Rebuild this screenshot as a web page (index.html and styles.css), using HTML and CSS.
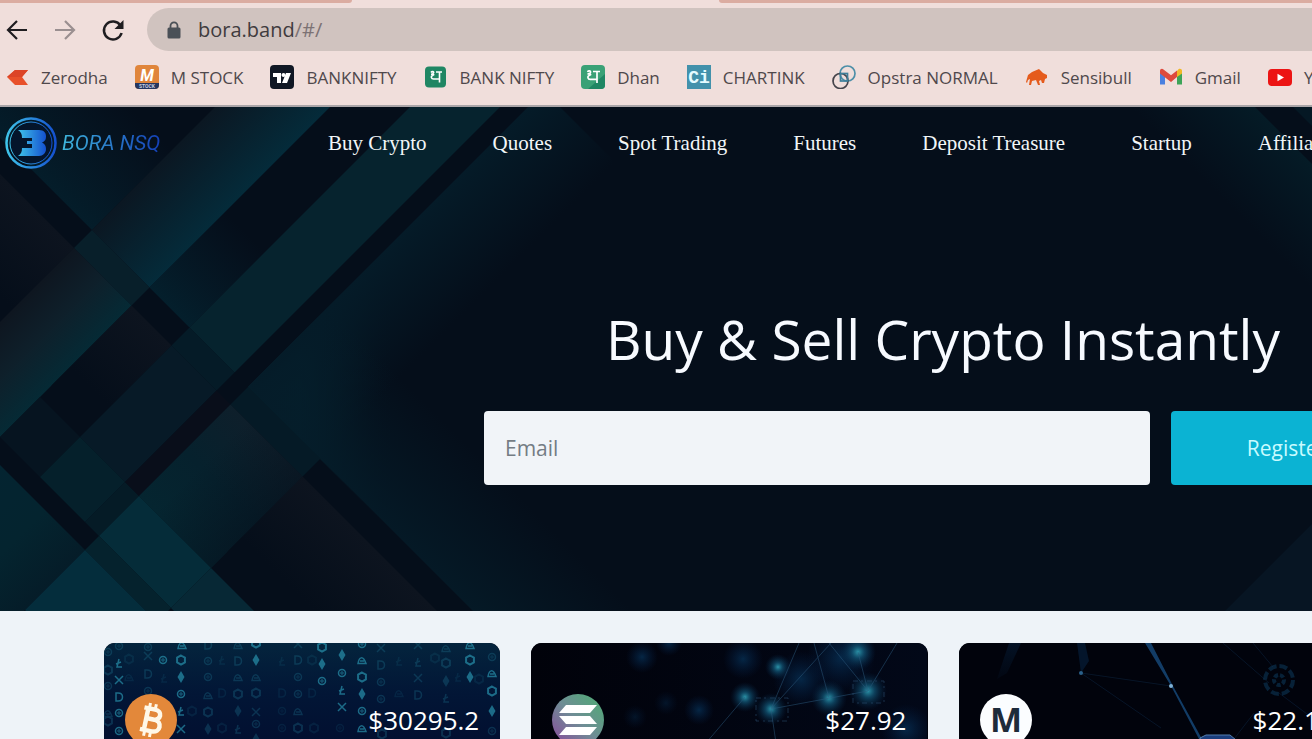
FILE: index.html
```
<!DOCTYPE html>
<html lang="en">
<head>
    <meta charset="UTF-8">
    <meta name="viewport" content="width=device-width, initial-scale=1.0">
    <title>Bora NSQ</title>
    <link rel="stylesheet" href="styles.css">
</head>
<body>

    <div class="browser">
        <div class="tabs">
            <div class="tab tab-left"></div>
            <div class="tab tab-right"></div>
        </div>
        <div class="toolbar">
            <button class="tool" aria-label="Back">
                <svg width="24" height="24" viewBox="0 0 24 24" fill="none" stroke="#1f1d20" stroke-width="2.2"><path d="M22 12H3M12 3l-9 9 9 9"/></svg>
            </button>
            <button class="tool" aria-label="Forward">
                <svg width="24" height="24" viewBox="0 0 24 24" fill="none" stroke="#9a8f90" stroke-width="2.2"><path d="M2 12h19M12 3l9 9-9 9"/></svg>
            </button>
            <button class="tool" aria-label="Reload">
                <svg width="24" height="24" viewBox="0 0 24 24"><path d="M19.5 7.5A9 9 0 1 0 20.6 15" fill="none" stroke="#1f1d20" stroke-width="2.5"/><path d="M22.5 2v9h-9z" fill="#1f1d20"/></svg>
            </button>
            <div class="address">
                <svg width="14" height="18" viewBox="0 0 14 18"><rect x="0.5" y="6.500" width="13" height="11" rx="1.500" fill="#4a5057"/><path d="M3.500 7V4.800a3.500 3.500 0 0 1 7 0V7" fill="none" stroke="#4a5057" stroke-width="1.800"/></svg>
                <span class="url">bora.band<span class="hash">/#/</span></span>
            </div>
        </div>
        <nav class="bookmarks">
            <a href="#">
                <svg width="24" height="24" viewBox="0 0 24 24"><path d="M2 12l8-7h13l-6 7 6 8H10z" fill="#e8502a"/><path d="M2 12l8-7h13l-6 7z" fill="#dc4427"/></svg>
                Zerodha</a>
            <a href="#">
                <svg width="24" height="24" viewBox="0 0 24 24"><rect width="24" height="24" rx="4" fill="#e0853b"/><path d="M0 18h24v2a4 4 0 0 1-4 4H4a4 4 0 0 1-4-4z" fill="#24365f"/><text x="12" y="15.500" class="ico-m">M</text><text x="12" y="23" class="ico-stock">STOCK</text></svg>
                M STOCK</a>
            <a href="#">
                <svg width="24" height="24" viewBox="0 0 24 24"><rect width="24" height="24" rx="4" fill="#101724"/><path d="M3 8h8v10H7v-6H3zM16 8h5l-4 10h-5z" fill="#fff"/><circle cx="13.500" cy="10" r="2" fill="#fff"/></svg>
                BANKNIFTY</a>
            <a href="#">
                <svg width="24" height="24" viewBox="0 0 24 24"><rect x="1" y="1.500" width="21" height="21" rx="4" fill="#1f8663"/><g fill="none" stroke="#fff" stroke-width="1.600"><path d="M12 7h6M15.500 7v10.500M7 7.500c1-1.500 3-1 2.600.4C9.300 9 8 9.200 7 9.200c3 0 3.500.6 1.500 1.300-2 1-1.300 3.500 1 3.500H15"/></g></svg>
                BANK NIFTY</a>
            <a href="#">
                <svg width="24" height="24" viewBox="0 0 24 24"><rect width="24" height="24" rx="4" fill="#3aa176"/><path d="M24 9v11a4 4 0 0 1-4 4H7z" fill="#1f8663"/><g fill="none" stroke="#fff" stroke-width="1.700"><path d="M12 6.500h7M16 6.500V18M6.500 7c1-1.700 3.400-1.200 3 .4-.3 1.200-1.700 1.500-3 1.500 3.400 0 4 .7 1.700 1.500-2.200 1-1.500 4 1 4h6.500"/></g></svg>
                Dhan</a>
            <a href="#">
                <svg width="24" height="24" viewBox="0 0 24 24"><rect width="24" height="24" fill="#4291ab"/><text x="12" y="18" class="ico-ci">Ci</text></svg>
                CHARTINK</a>
            <a href="#">
                <svg width="24" height="24" viewBox="0 0 24 24" fill="none" stroke-width="1.700"><circle cx="15.500" cy="8.500" r="7.500" stroke="#4d8fa8"/><circle cx="8.500" cy="16" r="7.500" stroke="#45444b"/><rect x="8.500" y="8.500" width="7" height="7.500" stroke="#3f7f9a"/></svg>
                Opstra NORMAL</a>
            <a href="#">
                <svg width="24" height="24" viewBox="0 0 24 24"><path d="M1 17l2-7 4-3 7-3 4 4 4 2v3l-2 1-1 4h-2l-1-3-2 1 1 4h-2l-2-5-4 1-1 4H4l1-6-2 1-1 3z" fill="#e55b1c"/></svg>
                Sensibull</a>
            <a href="#">
                <svg width="24" height="24" viewBox="0 0 24 24"><path d="M1 5.500v14h5V9z" fill="#4a80e0"/><path d="M18 9v10.500h5v-14z" fill="#3da458"/><path d="M18 6v6l5-3.600V6c0-2-2-2.800-3.500-1.700z" fill="#f1b824"/><path d="M1 6v2.400L12 17l6-5V5.500l-6 4.800L4.500 4.500C3 3.200 1 4 1 6z" fill="#de4a3d"/></svg>
                Gmail</a>
            <a href="#">
                <svg width="24" height="24" viewBox="0 0 24 24"><rect y="4" width="24" height="17" rx="4" fill="#ec1414"/><path d="M9.500 8.800v7.400l6.500-3.700z" fill="#fff"/></svg>
                YouTube</a>
        </nav>
    </div>

    <main class="page">
        <section class="hero">
            <svg class="hero-art" width="1886" height="504" viewBox="0 0 1886 504" aria-hidden="true">
                <defs>
                    <linearGradient id="bandA" gradientUnits="userSpaceOnUse" x1="215" y1="0" x2="330" y2="0">
                        <stop offset="0" stop-color="#0b1722"/><stop offset="1" stop-color="#042b3a"/>
                    </linearGradient>
                    <linearGradient id="bandALow" gradientUnits="userSpaceOnUse" x1="215" y1="0" x2="330" y2="0">
                        <stop offset="0" stop-color="#0e1620"/><stop offset="0.500" stop-color="#0e202b"/><stop offset="1" stop-color="#052a35"/>
                    </linearGradient>
                    <linearGradient id="gap" gradientUnits="userSpaceOnUse" x1="0" y1="-120" x2="0" y2="31">
                        <stop offset="0" stop-color="#051d2b" stop-opacity="0"/><stop offset="1" stop-color="#041f2c"/>
                    </linearGradient>
                    <linearGradient id="corner" gradientUnits="userSpaceOnUse" x1="0" y1="-130" x2="0" y2="31">
                        <stop offset="0" stop-color="#051d2b" stop-opacity="0"/><stop offset="1" stop-color="#041d2a"/>
                    </linearGradient>
                    <linearGradient id="cMid" gradientUnits="userSpaceOnUse" x1="0" y1="67" x2="0" y2="250">
                        <stop offset="0" stop-color="#0e1f2b"/><stop offset="0.500" stop-color="#06212d"/><stop offset="1" stop-color="#052530"/>
                    </linearGradient>
                    <linearGradient id="cShade" gradientUnits="userSpaceOnUse" x1="560" y1="0" x2="672" y2="0">
                        <stop offset="0" stop-color="#050e1a" stop-opacity="0"/><stop offset="1" stop-color="#050e1a" stop-opacity="0.500"/>
                    </linearGradient>
                    <linearGradient id="dusk" gradientUnits="userSpaceOnUse" x1="0" y1="67" x2="0" y2="190">
                        <stop offset="0" stop-color="#0d141f"/><stop offset="1" stop-color="#050e1a"/>
                    </linearGradient>
                    <linearGradient id="lowStrip" gradientUnits="userSpaceOnUse" x1="0" y1="-130" x2="0" y2="31">
                        <stop offset="0" stop-color="#051c29" stop-opacity="0"/><stop offset="1" stop-color="#051c29"/>
                    </linearGradient>
                    <linearGradient id="topStrip" gradientUnits="userSpaceOnUse" x1="528" y1="0" x2="670" y2="0">
                        <stop offset="0" stop-color="#051b28"/><stop offset="1" stop-color="#051b28" stop-opacity="0"/>
                    </linearGradient>
                    <linearGradient id="glow" gradientUnits="userSpaceOnUse" x1="248" y1="0" x2="395" y2="0">
                        <stop offset="0" stop-color="#052b38"/><stop offset="0.350" stop-color="#052531"/><stop offset="1" stop-color="#050e1a" stop-opacity="0"/>
                    </linearGradient>
                    <linearGradient id="right" gradientUnits="userSpaceOnUse" x1="0" y1="-1130" x2="0" y2="-1255">
                        <stop offset="0" stop-color="#051a26" stop-opacity="0"/><stop offset="1" stop-color="#051b26"/>
                    </linearGradient>
                    <linearGradient id="deep" gradientUnits="userSpaceOnUse" x1="350" y1="0" x2="530" y2="0">
                        <stop offset="0" stop-color="#042431"/><stop offset="0.550" stop-color="#04242f"/><stop offset="1" stop-color="#051c28"/>
                    </linearGradient>
                </defs>
                <rect width="1886" height="504" fill="#050e1a"/>
                <!-- fades out to the right of the point where the two dark bars meet -->
                <path d="M248 280L395 133V427z" fill="url(#glow)"/>
                <!-- the axes are turned by 45 degrees: u runs down right, v down left -->
                <g transform="matrix(0.5 0.5 -0.5 0.5 0 0)">
                    <rect x="-200" y="-230" width="415" height="261" fill="url(#corner)"/>
                    <rect x="0" y="67" width="215" height="160" fill="url(#dusk)"/>
                    <rect x="215" y="-340" width="115" height="371" fill="url(#bandA)"/>
                    <rect x="215" y="31" width="115" height="36" fill="#081f2a"/>
                    <rect x="215" y="67" width="115" height="270" fill="url(#bandALow)"/>
                    <rect x="330" y="-120" width="80" height="151" fill="url(#gap)"/>
                    <rect x="330" y="67" width="80" height="160" fill="url(#dusk)"/>
                    <rect x="330" y="250" width="80" height="80" fill="#061420"/>
                    <rect x="410" y="-500" width="90" height="531" fill="#06232e"/>
                    <rect x="410" y="31" width="90" height="36" fill="#051b27"/>
                    <rect x="410" y="67" width="90" height="183" fill="#071a27"/>
                    <rect x="410" y="250" width="90" height="80" fill="#05202b"/>
                    <rect x="500" y="250" width="28" height="80" fill="#051b26"/>
                    <rect x="500" y="67" width="28" height="183" fill="#090e1a"/>
                    <rect x="330" y="358" width="198" height="300" fill="url(#deep)"/>
                    <rect x="528" y="-560" width="142" height="591" fill="url(#topStrip)"/>
                    <rect x="528" y="-130" width="700" height="161" fill="url(#lowStrip)" opacity="0.800"/>
                    <rect x="528" y="31" width="144" height="36" fill="#051a26"/>
                    <rect x="528" y="67" width="144" height="183" fill="url(#cMid)"/>
                    <rect x="528" y="67" width="144" height="183" fill="url(#cShade)"/>
                    <rect x="672" y="67" width="320" height="150" fill="url(#dusk)"/>
                    <rect x="528" y="250" width="144" height="80" fill="#052c39"/>
                    <rect x="672" y="250" width="110" height="80" fill="#072835"/>
                    <rect x="528" y="330" width="144" height="28" fill="#05222d"/>
                    <rect x="528" y="358" width="144" height="120" fill="#042d3c"/>
                    <rect x="1000" y="-1255" width="600" height="125" fill="url(#right)"/>
                    <rect x="1200" y="-1500" width="300" height="207" fill="#051824"/>
                    <rect x="1729" y="-1500" width="700" height="780" fill="#071523"/>
                </g>
            </svg>

            <header class="header">
                <a class="logo" href="#">
                    <svg width="54" height="54" viewBox="0 0 54 54">
                        <defs>
                            <linearGradient id="brand" x1="0" y1="0" x2="1" y2="0"><stop offset="0" stop-color="#3fc4ea"/><stop offset="1" stop-color="#1450cf"/></linearGradient>
                        </defs>
                        <circle cx="27" cy="27" r="24.500" fill="none" stroke="url(#brand)" stroke-width="2.500"/>
                        <circle cx="27" cy="27" r="21" fill="#04152b" stroke="url(#brand)" stroke-width="1"/>
                        <path d="M14 14h21c5 0 7 3 7 6 0 4-1 5-4 6.500 3 1.500 4 3.500 4 6.500 0 4-3 7-7 7H14c3-2 4-4 4-8h10v-4h-5v-3h5v-3H18c0-4-1-6-4-8z" fill="url(#brand)"/>
                    </svg>
                    <span class="logo-name">BORA NSQ</span>
                </a>
                <nav class="menu">
                    <a href="#">Buy Crypto</a>
                    <a href="#">Quotes</a>
                    <a href="#">Spot Trading</a>
                    <a href="#">Futures</a>
                    <a href="#">Deposit Treasure</a>
                    <a href="#">Startup</a>
                    <a href="#">Affiliate</a>
                </nav>
            </header>

            <div class="intro">
                <h1>Buy &amp; Sell Crypto Instantly</h1>
                <form class="signup">
                    <input type="email" placeholder="Email" aria-label="Email">
                    <button type="button">Register</button>
                </form>
            </div>
        </section>

        <section class="cards">
            <article class="card">
                <svg class="card-art" width="396" height="200" viewBox="0 0 396 200" aria-hidden="true">
                    <defs>
                        <linearGradient id="sea" x1="0" y1="0" x2="0" y2="1"><stop offset="0" stop-color="#04243d"/><stop offset="0.250" stop-color="#021636"/><stop offset="0.500" stop-color="#020f30"/></linearGradient>
                        <path id="hex" d="M0-4.500l3.900 2.200v4.600L0 4.500l-3.900-2.200v-4.600z" fill="none" stroke="#2891ac" stroke-width="2"/>
                        <path id="eth" d="M0-6L3.500 0 0 6-3.500 0z" fill="#2891ac"/>
                        <path id="cross" d="M-4-4l8 8M4-4l-8 8" stroke="#2891ac" stroke-width="1.500"/>
                        <g id="coin" fill="none" stroke="#2891ac"><circle r="3.500" stroke-width="1.500"/><circle r="1.200"/></g>
                        <path id="tri" d="M-4 3.500C-3-3 1-5 4 3.500zM-2 1h4" fill="none" stroke="#2891ac" stroke-width="1.500"/>
                        <path id="ell" d="M0-4L-2 4H3M-3 1L2-1" fill="none" stroke="#2891ac" stroke-width="1.500"/>
                        <path id="dee" d="M-3-4h2c6 0 6 8 0 8h-2z" fill="none" stroke="#2891ac" stroke-width="1.500"/>
                    </defs>
                    <rect width="396" height="200" fill="url(#sea)"/>
                    <g opacity="0.700">
                        <use href="#hex" x="77" y="17"/><use href="#eth" x="77" y="34"/><use href="#coin" x="77" y="51"/><use href="#ell" x="77" y="68"/><use href="#cross" x="77" y="86"/><use href="#tri" x="78" y="2"/>
                        <use href="#hex" x="152" y="0"/><use href="#eth" x="152" y="17"/><use href="#coin" x="59" y="17"/>
                        <use href="#hex" x="218" y="4"/><use href="#eth" x="218" y="21"/><use href="#coin" x="218" y="38"/>
                        <use href="#eth" x="238" y="12"/><use href="#coin" x="238" y="30"/><use href="#ell" x="238" y="47"/><use href="#cross" x="238" y="64"/>
                        <use href="#coin" x="258" y="1"/><use href="#tri" x="258" y="17"/><use href="#hex" x="258" y="34"/><use href="#eth" x="258" y="51"/><use href="#coin" x="258" y="68"/><use href="#tri" x="258" y="85"/>
                        <use href="#hex" x="366" y="17"/><use href="#eth" x="366" y="34"/><use href="#tri" x="366" y="2"/>
                        <use href="#tri" x="388" y="30"/><use href="#hex" x="388" y="48"/><use href="#eth" x="388" y="68"/>
                        <use href="#ell" x="15" y="20"/><use href="#cross" x="15" y="37"/><use href="#dee" x="15" y="54"/><use href="#coin" x="15" y="70"/><use href="#coin" x="15" y="88"/>
                    </g>
                    <g opacity="0.250">
                        <use href="#coin" x="4" y="9"/><use href="#hex" x="4" y="27"/><use href="#coin" x="4" y="43"/><use href="#tri" x="4" y="70"/><use href="#hex" x="4" y="78"/><use href="#coin" x="15" y="3"/>
                        <use href="#cross" x="44" y="13"/><use href="#dee" x="44" y="31"/><use href="#coin" x="44" y="48"/><use href="#coin" x="44" y="4"/>
                        <use href="#dee" x="104" y="2"/><use href="#coin" x="104" y="18"/><use href="#coin" x="104" y="34"/><use href="#tri" x="104" y="52"/><use href="#hex" x="104" y="69"/><use href="#eth" x="104" y="86"/>
                        <use href="#tri" x="134" y="2"/><use href="#dee" x="134" y="18"/><use href="#tri" x="134" y="34"/><use href="#hex" x="134" y="51"/><use href="#eth" x="134" y="68"/><use href="#ell" x="134" y="86"/>
                        <use href="#tri" x="152" y="34"/><use href="#hex" x="152" y="50"/><use href="#cross" x="152" y="69"/><use href="#coin" x="152" y="81"/><use href="#eth" x="152" y="96"/>
                        <use href="#cross" x="194" y="1"/><use href="#dee" x="194" y="17"/><use href="#coin" x="194" y="34"/><use href="#coin" x="194" y="51"/><use href="#tri" x="194" y="68"/><use href="#hex" x="194" y="85"/>
                        <use href="#cross" x="277" y="5"/><use href="#dee" x="277" y="22"/><use href="#coin" x="277" y="39"/><use href="#coin" x="277" y="56"/><use href="#hex" x="278" y="91"/>
                        <use href="#cross" x="314" y="2"/><use href="#ell" x="314" y="19"/><use href="#cross" x="314" y="35"/><use href="#dee" x="314" y="52"/>
                        <use href="#tri" x="342" y="5"/><use href="#hex" x="342" y="20"/><use href="#eth" x="342" y="38"/><use href="#ell" x="342" y="55"/><use href="#hex" x="342" y="90"/>
                        <use href="#coin" x="388" y="14"/><use href="#coin" x="388" y="88"/>
                    </g>
                    <g opacity="0.120">
                        <use href="#hex" x="25" y="16"/><use href="#tri" x="25" y="34"/><use href="#ell" x="60" y="35"/><use href="#hex" x="88" y="68"/><use href="#ell" x="118" y="17"/><use href="#dee" x="118" y="50"/><use href="#hex" x="118" y="85"/>
                        <use href="#ell" x="178" y="18"/><use href="#dee" x="178" y="50"/><use href="#coin" x="178" y="68"/><use href="#coin" x="178" y="85"/><use href="#hex" x="208" y="17"/><use href="#dee" x="208" y="50"/><use href="#hex" x="210" y="85"/>
                        <use href="#ell" x="295" y="18"/><use href="#tri" x="295" y="50"/><use href="#hex" x="331" y="15"/><use href="#ell" x="354" y="34"/><use href="#hex" x="375" y="36"/><use href="#coin" x="236" y="85"/>
                    </g>
                </svg>
                <div class="card-row">
                    <svg width="52" height="52" viewBox="0 0 52 52"><circle cx="26" cy="26" r="26" fill="#e3883a"/><g transform="rotate(12 26 26)" fill="none" stroke="#fff8e8"><path d="M17 15h11c8 0 8 10 0 10h-7h8c9 0 9 12 0 12H17M21 14v23" stroke-width="4.500"/><path d="M22 9.500v6M28 9.500v6M22 37v6M28 37v6" stroke-width="3"/></g></svg>
                    <span class="price">$30295.2</span>
                </div>
            </article>

            <article class="card">
                <svg class="card-art" width="396" height="200" viewBox="0 0 396 200" aria-hidden="true">
                    <defs>
                        <radialGradient id="node"><stop offset="0" stop-color="#2b93a8"/><stop offset="0.350" stop-color="#12597a" stop-opacity="0.700"/><stop offset="1" stop-color="#062648" stop-opacity="0"/></radialGradient>
                        <radialGradient id="haze"><stop offset="0" stop-color="#07355c" stop-opacity="0.700"/><stop offset="1" stop-color="#042048" stop-opacity="0"/></radialGradient>
                        <linearGradient id="night" x1="0" y1="0" x2="1" y2="0"><stop offset="0" stop-color="#01020a"/><stop offset="1" stop-color="#020818"/></linearGradient>
                    </defs>
                    <rect width="396" height="200" fill="url(#night)"/>
                    <g fill="url(#haze)">
                        <circle cx="111" cy="14" r="16"/><circle cx="138" cy="0" r="13"/><circle cx="168" cy="67" r="15"/><circle cx="212" cy="16" r="20"/><circle cx="135" cy="60" r="12" opacity="0.500"/><circle cx="104" cy="74" r="12" opacity="0.500"/><circle cx="270" cy="36" r="28"/><circle cx="310" cy="15" r="34"/><circle cx="375" cy="86" r="25"/>
                    </g>
                    <g fill="url(#node)">
                        <circle cx="247" cy="24" r="13"/><circle cx="214" cy="54" r="15"/><circle cx="240" cy="66" r="16"/><circle cx="298" cy="55" r="18"/><circle cx="337" cy="48" r="19"/><circle cx="327" cy="9" r="18"/>
                    </g>
                    <g stroke="#2c5a7d" stroke-width="1" opacity="0.500">
                        <path d="M240 66L268 0M240 66L300 0M240 66L337 48M337 48L298 0M337 48L327 9M337 48L366 0M298 55L283 0M240 66L245 100M214 54L175 100"/>
                    </g>
                    <g fill="none" stroke="#31577b" stroke-dasharray="5 3 2 4" opacity="0.500">
                        <rect x="225" y="55" width="32" height="23"/><rect x="322" y="38" width="31" height="22"/>
                    </g>
                </svg>
                <div class="card-row">
                    <svg width="52" height="52" viewBox="0 0 52 52">
                        <defs><linearGradient id="sol" x1="0" y1="1" x2="1" y2="0"><stop offset="0.100" stop-color="#85549b"/><stop offset="0.500" stop-color="#6f8d95"/><stop offset="0.900" stop-color="#52a878"/></linearGradient></defs>
                        <circle cx="26" cy="26" r="26" fill="url(#sol)"/>
                        <path d="M14 11h31l-7 8H7zM7 22h31l7 8H14zM14 33h31l-7 8H7z" fill="#fff"/>
                    </svg>
                    <span class="price">$27.92</span>
                </div>
            </article>

            <article class="card">
                <svg class="card-art" width="396" height="200" viewBox="0 0 396 200" aria-hidden="true">
                    <defs>
                        <linearGradient id="ray" x1="0" y1="0" x2="0" y2="1"><stop offset="0" stop-color="#08284a" stop-opacity="0.400"/><stop offset="1" stop-color="#08284a" stop-opacity="0.100"/></linearGradient>
                    </defs>
                    <rect width="396" height="200" fill="#01030c"/>
                    <path d="M50 0L38 36 48 30 62 0z" fill="url(#ray)"/>
                    <path d="M118 0l4 30 8-12-4-18z" fill="#08284a" opacity="0.500"/>
                    <path d="M186 0h6l22 43 29 53h-3l-28-53z" fill="#123c66"/>
                    <g fill="none" stroke="#11304f" opacity="0.400"><path d="M122 30l90 13M122 30l80 55M264 0l46 40M294 0l20 24M320 50l40 30M295 70l-20 26"/></g>
                    <circle cx="122" cy="30" r="2" fill="#2a6089"/><circle cx="212" cy="43" r="2" fill="#7fb0d4"/>
                    <path d="M241 95l6-3h24l6 5-6 6h-28z" fill="#1a3d7c" stroke="#557fae"/>
                    <g fill="none" stroke="#0e4064" stroke-width="4" opacity="0.500"><circle cx="320" cy="37" r="14" stroke-dasharray="8 3"/><circle cx="320" cy="37" r="5" stroke-dasharray="4 2"/></g>
                </svg>
                <div class="card-row">
                    <svg width="52" height="52" viewBox="0 0 52 52"><circle cx="26" cy="26" r="26" fill="#fbfdff"/><text x="26" y="38" class="coin-m">M</text></svg>
                    <span class="price">$22.17</span>
                </div>
            </article>

            <article class="card"></article>
        </section>
    </main>

</body>
</html>
```
FILE: styles.css
```
* {
    box-sizing: border-box;
}
body {
    margin: 0;
    overflow: hidden;
    font-family: "Open Sans", "Noto Sans", sans-serif;
    background-color: #eef3f8;
}
a {
    color: inherit;
    text-decoration: none;
}

/* browser bar */
.browser {
    background-color: #f0dedb;
    border-bottom: 2px solid #aaa5a8;
}
.tabs {
    display: flex;
    justify-content: space-between;
    height: 3px;
}
.tab {
    background-color: #dbaca1;
}
.tab-left {
    width: 352px;
    border-bottom-right-radius: 3px;
}
.tab-right {
    width: calc(100% - 719px);
    border-bottom-left-radius: 3px;
}
.toolbar {
    display: flex;
    align-items: center;
    gap: 24px;
    padding: 5px 0 0 5px;
}
.tool {
    display: flex;
    padding: 0;
    border: 0;
    background: none;
}
.address {
    flex: 1;
    display: flex;
    align-items: center;
    gap: 17px;
    height: 43px;
    margin-left: -2px;
    padding-left: 20px;
    border-radius: 22px 0 0 22px;
    background-color: #d0c3bf;
}
.url {
    font-size: 20px;
    color: #403b3e;
}
.hash {
    color: #7c7274;
}
.bookmarks {
    display: flex;
    align-items: center;
    gap: 27px;
    height: 54px;
    padding: 0 0 2px 5px;
    font-size: 17px;
    color: #4f484b;
    white-space: nowrap;
}
.bookmarks a {
    display: flex;
    align-items: center;
    gap: 12px;
}
.bookmarks svg {
    flex: none;
}
.ico-m {
    font: italic bold 16px Roboto, sans-serif;
    text-anchor: middle;
    fill: #fff;
}
.ico-stock {
    font: bold 5px Roboto, sans-serif;
    text-anchor: middle;
    fill: #c9cfe0;
}
.ico-ci {
    font: bold 18px "Liberation Mono", monospace;
    text-anchor: middle;
    fill: #e4fbff;
}

/* site */
.page {
    min-width: 1886px;
}
.hero {
    position: relative;
    height: 504px;
    background-color: #050e1a;
}
.hero-art {
    position: absolute;
    top: 0;
    left: 0;
}
.header {
    position: relative;
    display: flex;
    align-items: center;
    height: 72px;
    padding-left: 4px;
}
.logo {
    display: flex;
    align-items: center;
    gap: 4px;
    width: 324px;
}
.logo-name {
    font: italic 400 21px Roboto, sans-serif;
    color: transparent;
    background: linear-gradient(90deg, #3fb6dc, #1440b8);
    background-clip: text;
    -webkit-background-clip: text;
}
.menu {
    display: flex;
    gap: 66px;
    font-family: "Liberation Serif", serif;
    font-size: 21px;
    color: #f2f6f8;
}
.intro {
    position: relative;
    display: flex;
    flex-direction: column;
    align-items: center;
    gap: 32px;
    padding-top: 120px;
}
h1 {
    margin: 0;
    font-size: 55px;
    font-weight: 400;
    line-height: 80px;
    color: #f7faff;
}
.signup {
    display: flex;
    gap: 21px;
}
.signup input {
    width: 666px;
    height: 74px;
    padding: 0 21px;
    border: 0;
    border-radius: 4px;
    font: 21px "Open Sans", sans-serif;
    background-color: #f1f4f8;
}
.signup input::placeholder {
    color: #747c84;
}
.signup button {
    width: 231px;
    height: 74px;
    border: 0;
    border-radius: 4px;
    font: 500 21px "Open Sans", sans-serif;
    color: #c9fbff;
    background-color: #0bb3d3;
}
.cards {
    display: grid;
    grid-template-columns: repeat(4, 1fr);
    gap: 31px;
    padding: 32px 104px;
}
.card {
    position: relative;
    height: 200px;
    border-radius: 11px;
    overflow: hidden;
    background-color: #01030c;
}
.card-art {
    position: absolute;
    top: 0;
    left: 0;
}
.card-row {
    position: relative;
    display: flex;
    justify-content: space-between;
    align-items: center;
    padding: 51px 21px 0;
}
.price {
    font-size: 26px;
    line-height: 32px;
    color: #fff;
}
.coin-m {
    font: bold 34px "Open Sans", sans-serif;
    text-anchor: middle;
    fill: #1e2b3a;
}
```
